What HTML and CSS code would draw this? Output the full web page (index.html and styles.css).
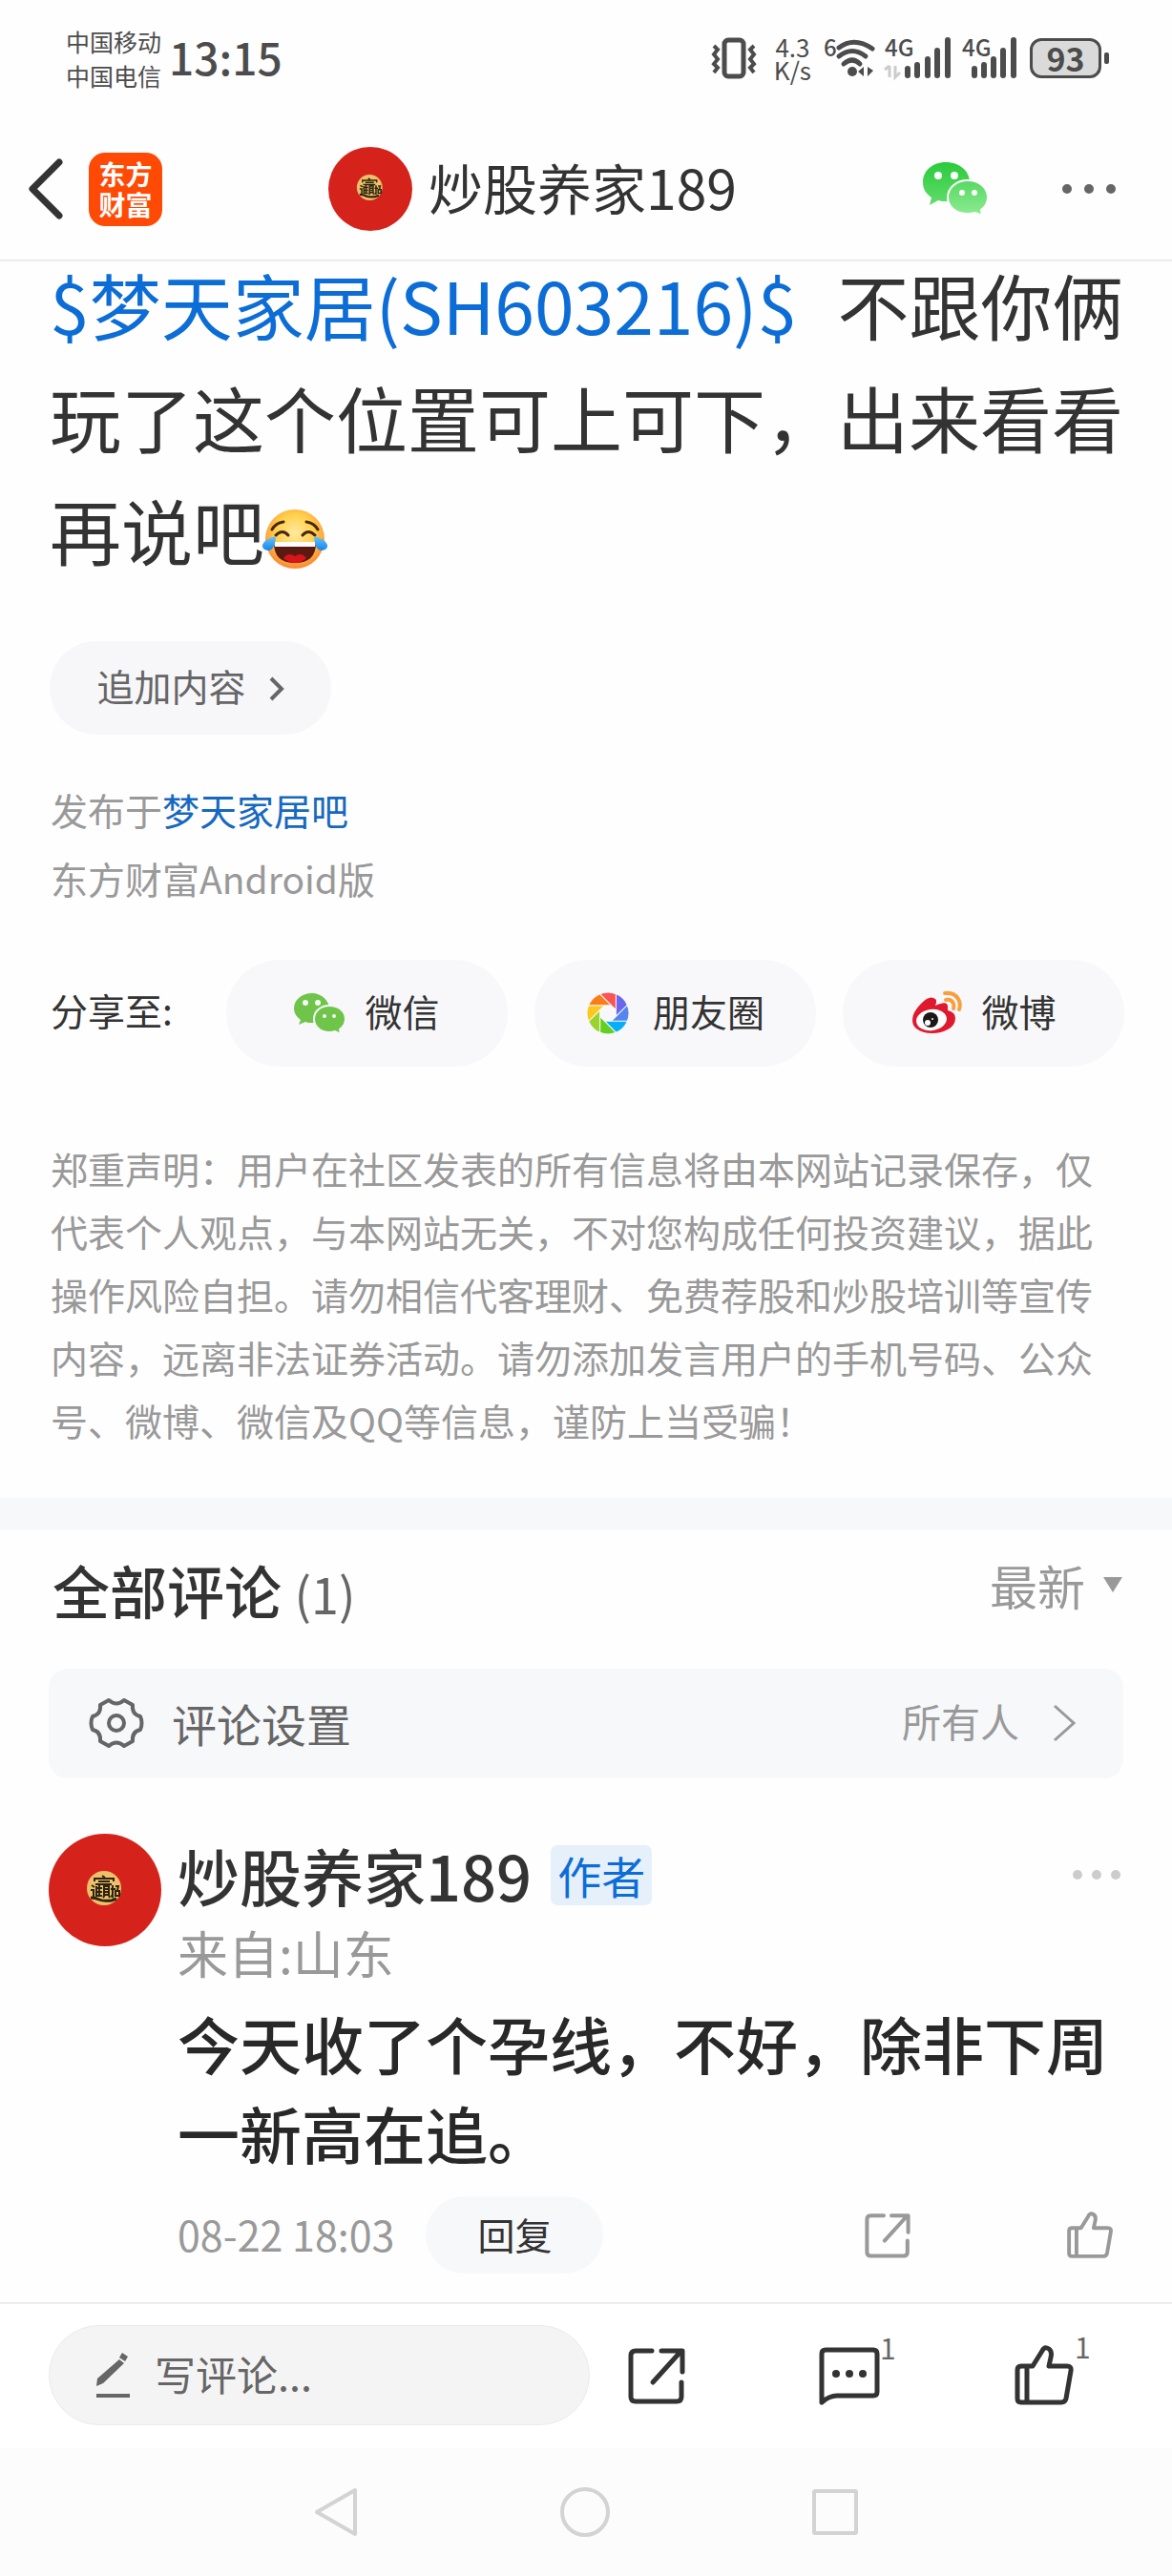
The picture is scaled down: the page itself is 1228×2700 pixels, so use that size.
FILE: index.html
```html
<!DOCTYPE html>
<html lang="zh-CN">
<head>
<meta charset="utf-8">
<meta name="viewport" content="width=device-width, initial-scale=1">
<title>炒股养家189</title>
<link rel="stylesheet" href="styles.css">
</head>
<body>
<svg class="defs" width="0" height="0" aria-hidden="true">
  <defs>
    <linearGradient id="wx-a" x1="0" y1="0" x2="0" y2="1"><stop offset="0" stop-color="#2bcb3c"/><stop offset="1" stop-color="#62dc6b"/></linearGradient>
    <linearGradient id="wx-b" x1="0" y1="0" x2="0" y2="1"><stop offset="0" stop-color="#58d863"/><stop offset="1" stop-color="#8eec92"/></linearGradient>
    <radialGradient id="face" cx=".5" cy=".4" r=".65"><stop offset="0" stop-color="#ffe9a0"/><stop offset=".5" stop-color="#ffd04a"/><stop offset="1" stop-color="#fb7a2c"/></radialGradient>
    <linearGradient id="tear" x1="0" y1="0" x2="0" y2="1"><stop offset="0" stop-color="#6cc4fb"/><stop offset="1" stop-color="#1585e8"/></linearGradient>
    <symbol id="avatar" viewBox="0 0 118 118">
      <circle cx="59" cy="59" r="59" fill="#d5231c"/>
      <circle cx="58" cy="57" r="18" fill="#eec069"/>
      <g fill="none" stroke="#2c2410" stroke-width="2">
        <path d="M56 44l3 2M48 50v-3h20v3M52 50h12M49 53h17M45 54l3 2M44 59h3v7M50 55v11M50 57h6M50 61h6M50 65h6M53 54v12M58 55h5v9h-5zM58 58h5M58 61h5M57 67l2-3M64 67l-1-2M65 58h5M67 54v12l-2-1M70 55h3l-1 4M70 60h4v5h-4z"/>
        <path d="M44 67q5 0 9 2t13 1l5-2" stroke-width="3"/>
      </g>
    </symbol>
    <symbol id="share" viewBox="0 0 60 60">
      <path d="M25 4H8Q3 4 3 9v43q0 5 5 5h43q5 0 5-5V37M35 4h22v22M55 5L26 37"/>
    </symbol>
    <symbol id="thumb" viewBox="0 0 64 64">
      <path d="M4 26q0-4 4-4h12l10-16q2-4 5-3 6 2 4 10l-2 9h19q5 0 4 5l-5 29q-1 4-5 4H8q-4 0-4-4zM14 23v36"/>
    </symbol>
  </defs>
</svg>

<div class="status">
  <div class="carriers">中国移动<br>中国电信</div>
  <time class="clock">13:15</time>
  <svg class="vibrate" viewBox="0 0 48 44" width="48" height="44" fill="none" stroke="#4c4c4c">
    <rect x="14" y="3" width="20" height="38" rx="4" stroke-width="5"/>
    <path d="M3 9l4 4-4 5 4 5-4 5 4 4-4 5M45 9l-4 4 4 5-4 5 4 5-4 4 4 5" stroke-width="4"/>
  </svg>
  <div class="speed">4.3<br>K/s</div>
  <svg class="wifi" viewBox="0 0 56 46" width="56" height="46">
    <text x="0" y="21" class="net">6</text>
    <g fill="none" stroke="#4c4c4c" stroke-width="5" stroke-linecap="round"><path d="M16 12q16-12 35 1M16 21q14-11 28 0M21 29q9-8 17 0"/></g>
    <circle cx="30" cy="37" r="5" fill="#4c4c4c"/>
    <path d="M42 32v10l-6-5zM46 32v10l6-6z" fill="#4c4c4c"/>
  </svg>
  <svg class="signal" viewBox="0 0 70 46" width="70" height="46">
    <text x="0" y="21" class="net">4G</text>
    <path d="M5 31v12M0 35l5-4M11 31v12l5-5" fill="none" stroke="#ccc" stroke-width="3"/>
    <path d="M24 34v7M34 30v11M45 24v17M55 15v26M66 4v37" stroke="#4c4c4c" stroke-width="6" stroke-linecap="round"/>
  </svg>
  <svg class="signal second" viewBox="0 0 60 46" width="60" height="46">
    <text x="0" y="21" class="net">4G</text>
    <path d="M13 34v7M23 30v11M33 24v17M43 15v26M54 4v37" stroke="#4c4c4c" stroke-width="6" stroke-linecap="round"/>
  </svg>
  <div class="battery"><span>93</span></div>
</div>

<header class="topbar">
  <div class="side">
    <button class="plain" aria-label="返回"><svg viewBox="0 0 36 64" width="36" height="64" fill="none" stroke="#333" stroke-width="7" stroke-linejoin="round" stroke-linecap="round"><path d="M32 4L4 32l28 28"/></svg></button>
    <a class="logo" href="#">东方<br>财富</a>
  </div>
  <div class="who">
    <svg width="88" height="88"><use href="#avatar"/></svg>
    <h1>炒股养家189</h1>
  </div>
  <div class="side tools">
    <button class="plain" aria-label="微信">
      <svg viewBox="0 0 70 58" width="70" height="58">
        <path d="M25 1C11 1 1 10 1 22c0 7 3 12 9 16l-2 8 9-5c3 1 5 1 8 1 14 0 25-8 25-20S39 1 25 1z" fill="url(#wx-a)"/>
        <path d="M48 20c12 0 21 8 21 18 0 6-3 10-7 13l1 6-7-3c-3 1-5 1-8 1-12 0-21-7-21-17s9-18 21-18z" fill="url(#wx-b)" stroke="#fff" stroke-width="2"/>
        <g fill="#fff"><circle cx="17" cy="15" r="4"/><circle cx="34" cy="15" r="4"/><circle cx="42" cy="33" r="3"/><circle cx="55" cy="33" r="3"/></g>
      </svg>
    </button>
    <button class="plain" aria-label="更多"><svg viewBox="0 0 58 12" width="58" height="12" fill="#666"><circle cx="6" cy="6" r="5"/><circle cx="29" cy="6" r="5"/><circle cx="52" cy="6" r="5"/></svg></button>
  </div>
</header>

<main>
  <article class="post">
    <p class="post-text"><a class="stock" href="#">$梦天家居(SH603216)$</a>&nbsp; 不跟你俩玩了这个位置可上可下，出来看看再说吧<svg class="emoji" viewBox="0 0 70 64" width="70" height="64" role="img" aria-label="笑哭">
        <circle cx="35" cy="32" r="31" fill="url(#face)"/>
        <path d="M13 36h44q0 21-22 21T13 36z" fill="#5a1a10"/>
        <path d="M13 35h44l-1 5H14z" fill="#fff"/>
        <path d="M23 52q5-7 12-2 7-5 12 2-5 5-12 5t-12-5z" fill="#d8141c"/>
        <path d="M11 22q4-7 12-8M47 14q8 1 12 8M15 28q7-7 13 0M43 28q6-7 13 0" fill="none" stroke="#4a2410" stroke-width="3" stroke-linecap="round"/>
        <path d="M15 29q-1 15-8 15-7-1-6-6 2-6 14-9zM55 29q1 15 8 15 7-1 6-6-2-6-14-9z" fill="url(#tear)"/>
      </svg></p>
    <button class="append">追加内容<svg viewBox="0 0 16 26" width="16" height="26" fill="none" stroke="#666" stroke-width="4"><path d="M2 2l11 11L2 24"/></svg></button>
    <div class="meta">
      <div>发布于<a href="#">梦天家居吧</a></div>
      <div>东方财富Android版</div>
    </div>
    <div class="share-row">
      <span class="share-label">分享至:</span>
      <button class="pill">
        <svg viewBox="0 0 54 44" width="54" height="44">
          <path d="M19 1C8 1 0 8 0 17c0 5 3 9 7 12l-2 5 7-3c2 1 4 1 7 1 10 0 18-7 18-15S29 1 19 1z" fill="#6fc549"/>
          <path d="M37 14c10 0 17 6 17 14 0 4-2 8-6 11l1 5-6-3c-2 1-4 1-6 1-9 0-16-6-16-14s7-14 16-14z" fill="#6fc549" stroke="#f8f8fa" stroke-width="2"/>
          <g fill="#f8f8fa"><circle cx="12" cy="11" r="3"/><circle cx="25" cy="11" r="3"/><circle cx="32" cy="25" r="2"/><circle cx="42" cy="25" r="2"/></g>
        </svg>微信</button>
      <button class="pill wide">
        <svg viewBox="-23 -23 46 46" width="46" height="46">
          <g stroke="#f8f8fa" stroke-width="1" transform="rotate(-22.5)">
            <path d="M15.5-15.6A22 22 0 0 1 22 0L6.4 6.4Z" fill="#6a67ee"/>
            <path d="M15.5-15.6A22 22 0 0 1 22 0L6.4 6.4Z" fill="#5585ee" transform="rotate(45)"/>
            <path d="M15.5-15.6A22 22 0 0 1 22 0L6.4 6.4Z" fill="#06aef8" transform="rotate(90)"/>
            <path d="M15.5-15.6A22 22 0 0 1 22 0L6.4 6.4Z" fill="#62cf22" transform="rotate(135)"/>
            <path d="M15.5-15.6A22 22 0 0 1 22 0L6.4 6.4Z" fill="#9bd32b" transform="rotate(180)"/>
            <path d="M15.5-15.6A22 22 0 0 1 22 0L6.4 6.4Z" fill="#fdc81e" transform="rotate(225)"/>
            <path d="M15.5-15.6A22 22 0 0 1 22 0L6.4 6.4Z" fill="#fc7d18" transform="rotate(270)"/>
            <path d="M15.5-15.6A22 22 0 0 1 22 0L6.4 6.4Z" fill="#fa5454" transform="rotate(315)"/>
          </g>
        </svg>朋友圈</button>
      <button class="pill">
        <svg viewBox="0 0 54 46" width="54" height="46">
          <path d="M24 7q5 1 2 8 13-6 13 1v4q8 2 8 8 0 8-8 12-7 4-16 4-11 0-17-5-4-3-4-9Q2 22 11 13 19 5 24 7z" fill="#e01a2e"/>
          <ellipse cx="22" cy="30" rx="16" ry="11" fill="#fff" transform="rotate(-8 22 30)"/>
          <circle cx="21" cy="30" r="8" fill="#1c1818"/><circle cx="18" cy="33" r="3" fill="#fff"/><circle cx="23" cy="29" r="1" fill="#fff"/>
          <path d="M36 2q10-1 14 6 3 5 1 11M37 9q6-1 8 4 1 3 0 5" fill="none" stroke="#f6a040" stroke-width="4" stroke-linecap="round"/>
        </svg>微博</button>
    </div>
    <p class="notice">郑重声明：用户在社区发表的所有信息将由本网站记录保存，仅代表个人观点，与本网站无关，不对您构成任何投资建议，据此操作风险自担。请勿相信代客理财、免费荐股和炒股培训等宣传内容，远离非法证券活动。请勿添加发言用户的手机号码、公众号、微博、微信及QQ等信息，谨防上当受骗！</p>
  </article>

  <section class="comments">
    <div class="comments-head">
      <h2>全部评论 <span>(1)</span></h2>
      <button class="plain sort">最新<svg viewBox="0 0 22 16" width="22" height="16" fill="#999"><path d="M1 0h20L11 16z"/></svg></button>
    </div>
    <button class="settings">
      <svg viewBox="0 0 56 52" width="56" height="52" fill="none" stroke="#666" stroke-width="4" stroke-linejoin="round">
        <path d="M20 2q8 7 16 0l9 5q-1 10 8 12 3 7 0 14-9 2-8 12l-9 5q-8-7-16 0l-9-5q1-10-8-12-3-7 0-14 9-2 8-12z"/><circle cx="28" cy="26" r="8"/>
      </svg>
      <span>评论设置</span><span class="scope">所有人</span>
      <svg viewBox="0 0 24 40" width="24" height="40" fill="none" stroke="#999" stroke-width="3"><path d="M2 2l20 18L2 38"/></svg>
    </button>
    <article class="comment">
      <svg class="face" width="118" height="118"><use href="#avatar"/></svg>
      <div class="comment-body">
        <div class="comment-head">
          <h3>炒股养家189</h3><span class="badge">作者</span>
          <button class="plain more" aria-label="更多"><svg viewBox="0 0 50 12" width="50" height="12" fill="#ccc"><circle cx="5" cy="6" r="5"/><circle cx="25" cy="6" r="5"/><circle cx="45" cy="6" r="5"/></svg></button>
        </div>
        <div class="from">来自:山东</div>
        <p class="comment-text">今天收了个孕线，不好，除非下周一新高在追。</p>
        <div class="comment-foot">
          <time>08-22 18:03</time>
          <button class="reply">回复</button>
          <button class="plain act" aria-label="分享"><svg class="line" width="48" height="48"><use href="#share"/></svg></button>
          <button class="plain" aria-label="点赞"><svg class="line" width="50" height="50"><use href="#thumb"/></svg></button>
        </div>
      </div>
    </article>
  </section>
</main>

<footer class="bottombar">
  <label class="write">
    <svg viewBox="0 0 36 50" width="36" height="50" fill="#666"><path d="M25 8l5 4L8 33l-7 3 1-8zM28 1l6 4-3 5-6-4zM1 44h35v4H1z"/></svg>
    <input type="text" placeholder="写评论..." aria-label="写评论">
  </label>
  <div class="actions">
    <button class="plain" aria-label="分享"><svg class="line dark" width="60" height="60"><use href="#share"/></svg></button>
    <button class="plain" aria-label="评论"><svg class="line dark" viewBox="0 0 64 62" width="64" height="62"><path d="M3 8q0-4 4-4h50q4 0 4 4v40q0 4-4 4H19q-8 0-16 7z"/><g fill="#333" stroke="none"><circle cx="18" cy="29" r="4"/><circle cx="32" cy="29" r="4"/><circle cx="46" cy="29" r="4"/></g></svg><span class="count">1</span></button>
    <button class="plain" aria-label="点赞"><svg class="line dark" width="64" height="64"><use href="#thumb"/></svg><span class="count">1</span></button>
  </div>
</footer>

<nav class="sysnav">
  <button class="plain" aria-label="后退"><svg viewBox="0 0 50 54" width="50" height="54"><path d="M46 4v46L6 27z"/></svg></button>
  <button class="plain" aria-label="主页"><svg viewBox="0 0 54 54" width="54" height="54"><circle cx="27" cy="27" r="24"/></svg></button>
  <button class="plain" aria-label="最近任务"><svg viewBox="0 0 50 50" width="50" height="50"><rect x="3" y="3" width="44" height="44" rx="1"/></svg></button>
</nav>
</body>
</html>
```

FILE: styles.css
```css
* { box-sizing: border-box; }
body {
  margin: 0;
  min-height: 100vh;
  display: flex;
  flex-direction: column;
  background: #fefefe;
  color: #333;
  font-family: "Noto Sans CJK SC", sans-serif;
}
h1, h2, h3, p { margin: 0; }
a { color: #0d6dd6; text-decoration: none; }
button { font: inherit; color: inherit; border: 0; cursor: pointer; }
svg { display: block; flex: none; overflow: visible; }
.defs { position: absolute; }
.plain { background: none; padding: 0; display: flex; align-items: center; }

.status { display: flex; align-items: center; height: 124px; padding: 0 74px 2px 69px; color: #4c4c4c; }
.carriers { font-size: 25px; line-height: 36px; }
.clock { margin: 0 auto 4px 8px; font-size: 46px; font-weight: 500; }
.speed { margin: 0 13px 0 18px; font-size: 26px; line-height: 24px; text-align: center; }
.net { font: 500 24px "Noto Sans CJK SC", sans-serif; fill: #4c4c4c; }
.signal { margin-left: 8px; }
.second { margin-left: 11px; }
.battery {
  position: relative;
  display: flex;
  align-items: center;
  justify-content: center;
  width: 75px;
  height: 42px;
  margin-left: 11px;
  border: 3px solid #4c4c4c;
  border-radius: 12px;
  background: #dadada;
  font-size: 34px;
  font-weight: 700;
  line-height: 36px;
}
.battery::after { content: ""; position: absolute; right: -11px; top: 12px; width: 5px; height: 12px; border-radius: 2px; background: #4c4c4c; }

.topbar {
  display: flex;
  justify-content: space-between;
  align-items: center;
  height: 150px;
  padding: 0 58px 0 30px;
  border-bottom: 2px solid #ececec;
}
.side { display: flex; align-items: center; gap: 27px; }
.tools { gap: 76px; }
.logo {
  width: 77px;
  height: 77px;
  padding-top: 6px;
  border-radius: 17px;
  background: #ff4a05;
  color: #fff;
  font-size: 28px;
  font-weight: 700;
  line-height: 32px;
  text-align: center;
}
.who { display: flex; align-items: center; gap: 17px; margin-right: 20px; }
.who h1 { padding-bottom: 6px; font-size: 57px; font-weight: 400; line-height: 80px; }

main { flex: 1; overflow: hidden; }
.post { margin-top: -14px; padding: 0 50px 49px 52px; }
.post-text { font-size: 75px; line-height: 118px; }
.stock { margin-right: 9px; }
.emoji { display: inline-block; margin-left: -3px; vertical-align: -10px; }
.append {
  display: flex;
  align-items: center;
  justify-content: center;
  gap: 24px;
  width: 295px;
  height: 98px;
  margin-top: 58px;
  padding-bottom: 8px;
  border-radius: 49px;
  background: #f7f7fa;
  color: #666;
  font-size: 39px;
}
.append svg { margin-top: 8px; }
.meta { margin-top: 42px; padding-left: 1px; color: #999; font-size: 39px; line-height: 72px; }
.meta a { color: #1668c0; }
.share-row { display: flex; align-items: center; gap: 28px; margin-top: 50px; font-size: 39px; }
.share-label { width: 157px; padding: 0 0 8px 1px; }
.pill {
  flex: 1;
  display: flex;
  align-items: center;
  justify-content: center;
  gap: 20px;
  height: 112px;
  padding-bottom: 8px;
  border-radius: 56px;
  background: #f8f8fa;
}
.pill svg { margin-top: 6px; }
.wide { gap: 24px; }
.notice { margin-top: 73px; padding-left: 1px; color: #999; font-size: 39px; line-height: 66px; }

.comments { padding: 24px 51px 30px; border-top: 34px solid #f7f8fa; }
.comments-head { display: flex; justify-content: space-between; align-items: center; height: 80px; padding-left: 4px; }
.comments-head h2 { font-size: 60px; font-weight: 500; line-height: 80px; }
.comments-head h2 span { color: #666; font-size: 52px; font-weight: 400; }
.sort { gap: 18px; padding-bottom: 14px; color: #999; font-size: 50px; line-height: 72px; }
.settings {
  display: flex;
  align-items: center;
  gap: 30px;
  width: 100%;
  height: 115px;
  margin-top: 41px;
  padding: 0 50px 2px 43px;
  border-radius: 20px;
  background: #f7f8fa;
  color: #666;
  font-size: 47px;
}
.scope { margin: 0 5px 0 auto; padding-bottom: 6px; color: #999; font-size: 41px; }
.comment { display: flex; gap: 17px; margin-top: 58px; }
.comment-body { flex: 1; padding-top: 4px; }
.comment-head { display: flex; align-items: center; gap: 20px; height: 78px; }
.comment-head h3 { font-size: 65px; font-weight: 500; line-height: 78px; }
.badge { padding: 0 7px; border-radius: 7px; background: #e5f0fa; color: #0d6dd6; font-size: 46px; line-height: 63px; }
.more { margin: 0 3px 0 auto; }
.from { margin-top: 12px; color: #999; font-size: 53px; line-height: 60px; }
.comment-text { margin-top: 18px; color: #282828; font-size: 65px; font-weight: 500; line-height: 94px; }
.comment-foot { display: flex; align-items: center; height: 81px; margin-top: 20px; padding-right: 10px; }
.comment-foot time { padding-bottom: 3px; color: #999; font-size: 43px; }
.reply { width: 186px; height: 81px; margin-left: 33px; padding-bottom: 4px; border-radius: 41px; background: #f7f8fa; font-size: 39px; }
.act { margin: 0 163px 0 auto; }
.line { fill: none; stroke: #999; stroke-width: 5px; stroke-linecap: round; stroke-linejoin: round; }
.dark { stroke: #333; }

.bottombar { display: flex; align-items: center; padding: 22px 90px 24px 51px; border-top: 2px solid #ececec; background: #fff; }
.write {
  display: flex;
  align-items: center;
  gap: 26px;
  flex: 0 1 567px;
  min-width: 0;
  height: 105px;
  margin-right: 40px;
  padding: 0 48px;
  border: 1px solid #eaeaea;
  border-radius: 53px;
  background: #f4f4f4;
}
.write input { flex: 1; width: 100%; min-width: 0; padding: 0 0 6px; border: 0; outline: 0; background: none; color: #333; font: inherit; font-size: 43px; }
.write input::placeholder { color: #666; opacity: 1; }
.actions { flex: 1; display: flex; align-items: center; justify-content: space-between; padding-right: 12px; }
.actions .plain { position: relative; }
.count { position: absolute; left: 100%; top: -16px; color: #666; font-size: 30px; line-height: 34px; }

.sysnav { display: flex; justify-content: center; align-items: center; gap: 210px; height: 134px; padding-right: 2px; background: #fcfcfc; }
.sysnav svg { fill: none; stroke: #d3d3d3; stroke-width: 4px; stroke-linejoin: round; }
```
